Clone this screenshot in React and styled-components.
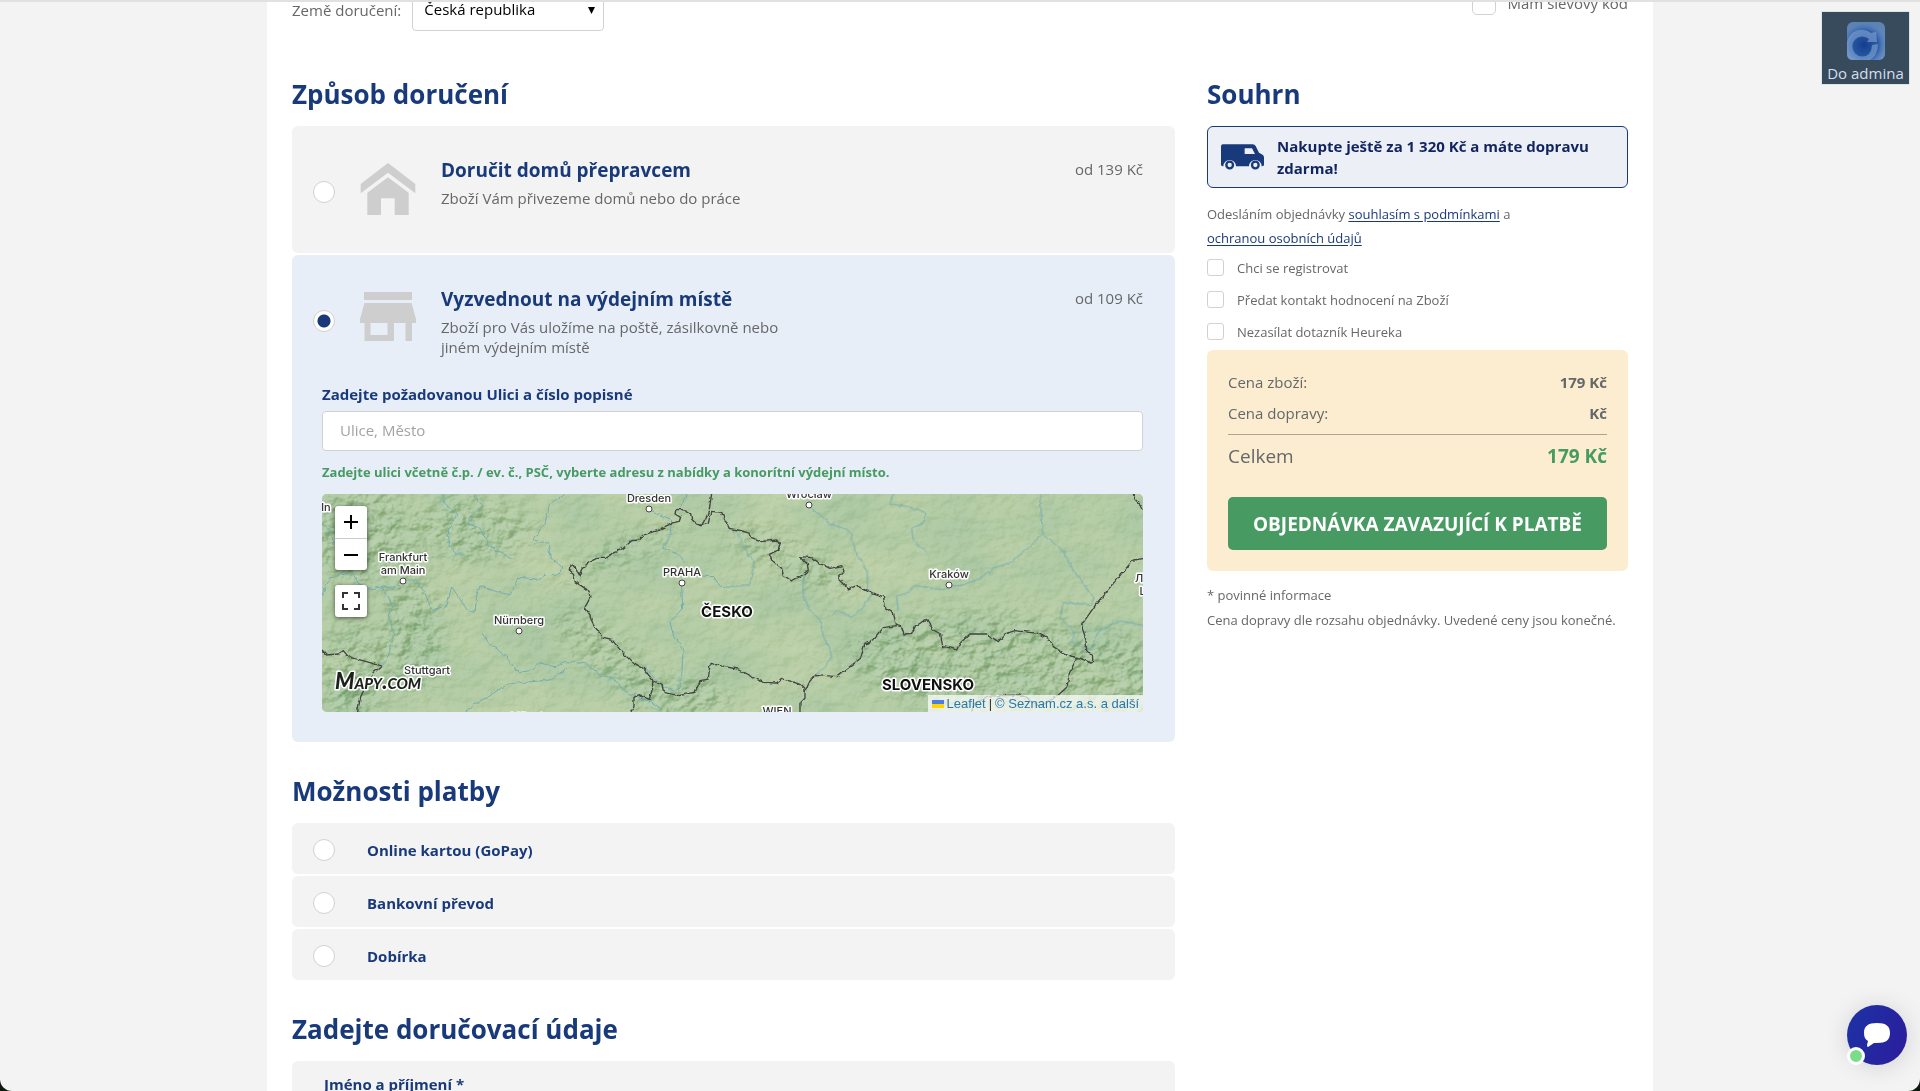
import React, { useState } from "react";
import styled, { createGlobalStyle, css } from "styled-components";

const color = {
  navy: "#193a7a",
  deepNavy: "#10245f",
  text: "#666769",
  grey: "#f3f3f3",
  blue: "#e8eef8",
  cream: "#fcedd0",
  green: "#479a61",
  line: "#d2d2d2",
};

const GlobalStyle = createGlobalStyle`
  *, *::before, *::after { box-sizing: border-box; }
  body {
    margin: 0;
    background: #0b1a0d;
    color: ${color.text};
    font: 15px/20px "Open Sans", "Noto Sans", sans-serif;
  }
  h2, h3, p { margin: 0; }
  button, input, select { font: inherit; }
`;

const Shell = styled.div`
  height: 100vh;
  overflow: hidden;
  background: ${color.grey};
  border-top: 2px solid #e1e1e1;
  border-radius: 0 0 12px 12px;
`;

const Page = styled.div`
  max-width: 1386px;
  margin: 0 auto;
  padding: 0 25px;
  background: #fff;
`;

const TopRow = styled.header`
  display: flex;
  justify-content: space-between;
  align-items: flex-end;
  height: 29px;
  overflow: hidden;
`;

const Country = styled.div`
  display: flex;
  align-items: center;
  gap: 11px;
`;

const SelectWrap = styled.div`
  position: relative;
  svg {
    position: absolute;
    right: 9px;
    top: 18px;
    pointer-events: none;
  }
`;

const Select = styled.select`
  appearance: none;
  display: block;
  width: 192px;
  height: 42px;
  padding: 0 11px 2px;
  border: 1px solid ${color.line};
  border-radius: 4px;
  background: #fff;
  color: #000;
`;

const Coupon = styled.label`
  display: flex;
  align-items: center;
  gap: 12px;
  padding-bottom: 16px;
`;

const Box = styled.input`
  appearance: none;
  flex: none;
  width: ${(p) => (p.$large ? 24 : 17)}px;
  height: ${(p) => (p.$large ? 24 : 17)}px;
  margin: 0;
  border: 1px solid ${color.line};
  border-radius: ${(p) => (p.$large ? 5 : 3)}px;
  background: #fff;
  &:checked { background: ${color.navy}; }
`;

const Radio = styled.input`
  appearance: none;
  flex: none;
  width: 22px;
  height: 22px;
  margin: 0;
  border: 1px solid ${color.line};
  border-radius: 50%;
  background: #fff;
  &:checked { background: radial-gradient(circle, ${color.navy} 6px, #fff 7px); }
`;

const Columns = styled.main`
  display: grid;
  grid-template-columns: minmax(0, 1fr) 421px;
  gap: 32px;
  padding-top: 45px;
`;

const Section = styled.section`
  margin-bottom: 31px;
`;

const Heading = styled.h2`
  padding-bottom: 14px;
  color: ${color.navy};
  font-size: 26px;
  line-height: 36px;
  font-weight: 700;
`;

const Stack = styled.div`
  display: flex;
  flex-direction: column;
  gap: 2px;
`;

const Card = styled.div`
  padding: 0 32px 30px 30px;
  border-radius: 6px;
  background: ${(p) => (p.$active ? color.blue : color.grey)};
`;

const Option = styled.label`
  display: grid;
  grid-template-columns: 22px 56px minmax(0, 350px) 1fr;
  column-gap: 25px;
  min-height: 97px;
  margin-left: -9px;
  padding-top: 30px;
`;

const OptionRadio = styled(Radio)`
  margin-top: 25px;
`;

const OptionIcon = styled.svg`
  margin-top: 7px;
  fill: #cecece;
`;

const OptionTitle = styled.h3`
  color: ${color.navy};
  font-size: 19px;
  line-height: 28px;
  font-weight: 700;
`;

const OptionText = styled.p`
  padding-top: 4px;
`;

const Price = styled.span`
  padding-top: 3px;
  text-align: right;
`;

const FieldLabel = styled.label`
  display: block;
  padding: 27px 0 7px;
  color: ${color.navy};
  font-weight: 700;
`;

const Field = styled.input`
  display: block;
  width: 100%;
  height: 40px;
  padding: 0 17px 2px;
  border: 1px solid ${color.line};
  border-radius: 4px;
  background: #fff;
  &::placeholder { color: #a3a3a3; opacity: 1; }
`;

const AddressCard = styled(Card)`
  padding: 13px 32px 30px;
  ${FieldLabel} { padding-top: 0; }
`;

const Hint = styled.p`
  padding: 11px 0 12px;
  color: ${color.green};
  font-size: 13px;
  font-weight: 700;
`;

const MapBox = styled.div`
  position: relative;
  height: 218px;
  overflow: hidden;
  border-radius: 5px;
  background: #bdd1a9;
  > svg { display: block; width: 100%; height: 100%; }
`;

const MapControls = styled.div`
  position: absolute;
  top: 12px;
  left: 13px;
  display: grid;
  gap: 15px;
`;

const ControlGroup = styled.div`
  display: grid;
  border-radius: 3px;
  background: #fff;
  box-shadow: 0 1px 4px rgba(0, 0, 0, 0.6);
`;

const MapButton = styled.button`
  display: grid;
  place-items: center;
  width: 32px;
  height: 32px;
  padding: 0;
  border: 0;
  background: none;
  & + & { border-top: 1px solid #ccc; }
`;

const Attribution = styled.div`
  position: absolute;
  right: 0;
  bottom: 0;
  display: flex;
  align-items: center;
  gap: 3px;
  padding: 0 4px;
  background: rgba(255, 255, 255, 0.7);
  color: #333;
  font: 13px/17px "Liberation Sans", Arial, sans-serif;
  a { color: #2a78ab; text-decoration: none; }
`;

const Payment = styled.label`
  display: flex;
  align-items: center;
  gap: 32px;
  height: 51px;
  padding: 3px 21px 0;
  border-radius: 6px;
  background: ${color.grey};
  color: ${color.navy};
  font-weight: 700;
`;

const Shipping = styled.div`
  display: flex;
  align-items: center;
  gap: 13px;
  min-height: 62px;
  padding: 8px 13px;
  border: 1px solid ${color.navy};
  border-radius: 6px;
  background: #eceff5;
  color: ${color.deepNavy};
  font-weight: 700;
  line-height: 22px;
  svg { flex: none; }
`;

const Terms = styled.p`
  padding: 14px 0 5px;
  font-size: 13px;
  line-height: 24px;
  a { color: ${color.navy}; text-underline-offset: 2px; }
`;

const Check = styled.label`
  display: flex;
  align-items: center;
  gap: 13px;
  height: 32px;
  padding-bottom: 7px;
  font-size: 13px;
`;

const Checks = styled.div`
  height: 95px;
`;

const Totals = styled.div`
  padding: 17px 21px 21px;
  border-radius: 6px;
  background: ${color.cream};
`;

const TotalRow = styled.div`
  display: flex;
  justify-content: space-between;
  line-height: 31px;
  ${(p) =>
    p.$sum &&
    css`
      margin-top: 5px;
      padding-top: 6px;
      border-top: 1px solid #b0a48e;
      font-size: 19px;
      strong { color: ${color.green}; }
    `}
`;

const Submit = styled.button`
  display: block;
  width: 100%;
  height: 53px;
  margin-top: 25px;
  padding: 0;
  border: 0;
  border-radius: 5px;
  background: ${color.green};
  color: #fff;
  font-size: 19px;
  font-weight: 700;
`;

const Notes = styled.div`
  padding-top: 12px;
  font-size: 13px;
  line-height: 25px;
`;

const AdminLink = styled.a`
  position: fixed;
  top: 11px;
  right: 10px;
  display: flex;
  flex-direction: column;
  align-items: center;
  gap: 3px;
  width: 89px;
  height: 74px;
  padding-top: 10px;
  border: 1px solid #dfe4e9;
  background: #374b5d;
  color: #d5dfeb;
  text-decoration: none;
`;

const ChatButton = styled.button`
  position: fixed;
  right: 13px;
  bottom: 26px;
  display: grid;
  place-items: center;
  width: 60px;
  height: 60px;
  padding: 0;
  border: 0;
  border-radius: 50%;
  background: linear-gradient(110deg, #1c33a4, #2c1c9c);
  box-shadow: 0 2px 24px rgba(0, 0, 0, 0.14);
  &::after {
    content: "";
    position: absolute;
    left: 0;
    bottom: 0;
    width: 18px;
    height: 18px;
    border: 3px solid #fff;
    border-radius: 50%;
    background: #7bdc8b;
  }
`;

const HouseIcon = () => (
  <OptionIcon width="56" height="52" viewBox="303 489 164 156">
    <path d="M385 489 467 552V580L385 518 303 580V552Z" />
    <path d="M385 532 447 578V645H405V595H364V645H323V578Z" />
  </OptionIcon>
);

const ShopIcon = () => (
  <OptionIcon width="56" height="49" viewBox="0 0 56 49">
    <path d="M4 0H52V8H4ZM4.500 11H51.500L56 27V31H0V27Z" />
    <path fillRule="evenodd" d="M4.500 31H34V49H4.500ZM10.500 31V43H27.500V31ZM45.500 31H52V49H45.500Z" />
  </OptionIcon>
);

const VanIcon = () => (
  <svg width="43" height="26" viewBox="92 252 129 76" fill={color.navy}>
    <path
      fillRule="evenodd"
      d="M98 252H187Q193 252 196 257L206 277 217 283Q221 286 221 291V313Q221 318 214 318A19 19 0 0 0 176 318H137A19 19 0 0 0 99 318Q92 318 92 313V258Q92 252 98 252ZM163 264V281H194L185 264Z"
    />
    <circle cx="118" cy="314" r="10" fill="none" stroke={color.navy} strokeWidth="7" />
    <circle cx="195" cy="314" r="10" fill="none" stroke={color.navy} strokeWidth="7" />
  </svg>
);

const borders = {
  west: [
    "M1205 42 1200 75 1192 105 1175 137 1160 132 1145 118 1142 100 1125 90 1098 88 1095 102 1112 112 1108 124 1090 128 1040 152 1000 165 985 180 965 182 940 205 915 215 885 235 860 235 835 248 815 268 808 288 795 262 780 255 778 270 790 280 795 305 830 328 843 348 825 382 840 405 850 435 880 472 905 478 935 515 965 545 1000 565 1028 600 1028 625 1018 658 985 645 972 652 972 680 962 697",
    "M36 510 50 525 85 522 100 512 115 530 150 540 215 558 190 580 175 600 160 630 150 660 142 697",
  ],
  middle: [
    "M190 588 215 600 222 622 265 632 315 622 330 590 355 585 360 535 405 545 440 552 490 578 520 592 560 594 575 580 635 600 645 610 645 640 630 655 630 685",
    "M332 122 355 115 362 82 395 85 405 105 418 130 455 138 480 145 485 158 515 170 560 165 570 180 565 195 538 208 545 225 575 250 580 270 605 288 635 272 655 255 652 238 632 215 665 218 690 235 720 250 755 242 762 258 742 280 775 312 800 302 835 320 880 335 888 370 910 385 920 422 880 428 855 460 825 478 812 520 780 545 740 575 710 572 680 568 660 588 645 620",
  ],
  east: [
    "M500 437 515 440 522 462 545 460 558 435 590 418 610 450 632 462 638 500 655 502 680 510 690 490 720 462 770 462 805 485 825 462 855 452 925 460 960 480 970 500 1010 525 1050 535 1088 550 1088 530 1070 512 1068 480 1055 435 1100 370 1150 310 1210 240 1245 235",
    "M1040 535 1018 580 1012 620 985 645 930 680 880 645 780 648 735 670 725 695",
    "M1210 42 1215 58 1232 75 1245 98",
  ],
};

const rivers = {
  west: [
    "M395 42 405 70 440 105 415 150 418 195 440 222 465 222",
    "M490 42 518 78 490 100 470 130 510 145 535 195 560 210 605 235",
    "M765 42 720 70 705 130 670 180 715 190 720 230 755 260 750 280 725 285M708 282 690 298 625 292 600 345 560 335 510 318 500 345 495 400 475 395 425 320 410 380 365 390 345 340 320 300 290 300 250 325 215 320 180 328 145 310 125 275 60 295 36 345",
    "M215 320 235 350 248 382 235 405 252 460 238 520 218 556",
    "M515 457 530 485 580 520 625 578 660 572 690 548 735 560 770 545 830 552 870 585 910 595 945 635 1020 665 1055 690",
    "M465 695 500 670 550 640 590 612 720 600 770 565",
    "M36 130 65 160 70 195",
    "M1025 92 1085 120 1080 170 1060 205 1110 225 1125 250M1130 42 1112 80",
    "M1115 318 1118 385 1080 425 1090 465 1120 505 1115 590 1105 632 1060 620 1000 560",
    "M1170 288 1210 290 1230 318 1260 322",
  ],
  east: [
    "M235 78 300 130 360 155 375 210 412 275 412 320 425 345 400 380 365 412 320 390 305 405",
    "M490 42 480 72 545 82 588 98 580 130 545 145 550 180 590 217",
    "M930 42 938 160 900 200 840 248 790 265 750 295 700 315 658 320 640 330 550 315 540 335 500 350 505 395",
    "M938 160 1000 215 1030 270 1070 325 1092 350 1085 375 1000 368 990 410 1030 450 1030 490 1090 508",
    "M1245 438 1170 422 1105 455 1090 500",
    "M25 158 45 210 72 245 60 315 0 320",
    "M222 280 218 345 240 390 270 420 280 470 305 520 295 550 262 580",
  ],
};

const origin = {
  west: "translate(-12 -14) scale(0.3333)",
  middle: "translate(268 -9) scale(0.3333)",
  east: "translate(408 -14) scale(0.3333)",
};

const cities = [
  { name: "Dresden", x: 327, y: 8, dotY: 15 },
  { name: "Wrocław", x: 487, y: 4, dotY: 11 },
  { name: "Frankfurt", x: 81, y: 67 },
  { name: "am Main", x: 81, y: 80, dotY: 87 },
  { name: "PRAHA", x: 360, y: 82, dotY: 89 },
  { name: "Nürnberg", x: 197, y: 130, dotY: 137 },
  { name: "Kraków", x: 627, y: 84, dotY: 91 },
  { name: "Stuttgart", x: 105, y: 180 },
  { name: "WIEN", x: 455, y: 221 },
  { name: "München", x: 213, y: 227 },
  { name: "ln", x: 4, y: 17 },
  { name: "Львів", x: 828, y: 88 },
  { name: "Lviv", x: 828, y: 101 },
];

const Label = styled.text`
  font: ${(p) => (p.$country ? "700 15px" : "500 11px")} Inter, sans-serif;
  fill: ${(p) => (p.$country ? "#111" : "#333")};
  stroke: #fff;
  stroke-width: 3px;
  stroke-linejoin: round;
  paint-order: stroke;
  text-anchor: middle;
`;

const Brand = styled.text`
  font: italic 900 22px Lato, sans-serif;
  font-variant: small-caps;
  fill: #1d211c;
  stroke: #fff;
  stroke-width: 3px;
  stroke-linejoin: round;
  paint-order: stroke;
`;

const MapDrawing = () => (
  <svg viewBox="0 0 821 218" preserveAspectRatio="xMidYMid slice" role="img" aria-label="Mapa výdejních míst">
    <defs>
      <filter id="relief" x="0" y="0" width="100%" height="100%" colorInterpolationFilters="sRGB">
        <feTurbulence type="fractalNoise" baseFrequency="0.07 0.09" numOctaves="4" seed="8" />
        <feDiffuseLighting surfaceScale="6" diffuseConstant="0.707" lightingColor="#fff">
          <feDistantLight azimuth="225" elevation="45" />
        </feDiffuseLighting>
      </filter>
      <filter id="tint" x="0" y="0" width="100%" height="100%" colorInterpolationFilters="sRGB">
        <feTurbulence type="fractalNoise" baseFrequency="0.012 0.02" numOctaves="4" seed="21" />
        <feColorMatrix values="0 0 0 0 0.66  0 0 0 0 0.78  0 0 0 0 0.64  2 0 0 0 -0.500" />
      </filter>
      <filter id="rough">
        <feTurbulence type="fractalNoise" baseFrequency="0.18" numOctaves="2" seed="4" result="n" />
        <feDisplacementMap in="SourceGraphic" in2="n" scale="4" xChannelSelector="R" yChannelSelector="G" />
      </filter>
      <filter id="soft" x="-30%" y="-30%" width="160%" height="160%"><feGaussianBlur stdDeviation="10" /></filter>
      <mask id="mountains">
        <g fill="#fff" filter="url(#soft)">
          <ellipse cx="660" cy="165" rx="130" ry="45" />
          <ellipse cx="785" cy="180" rx="50" ry="40" />
          <ellipse cx="290" cy="165" rx="70" ry="18" transform="rotate(40 290 165)" />
          <ellipse cx="300" cy="58" rx="70" ry="10" transform="rotate(-24 300 58)" />
          <ellipse cx="470" cy="65" rx="70" ry="16" transform="rotate(25 470 65)" />
          <ellipse cx="150" cy="35" rx="60" ry="30" />
          <ellipse cx="40" cy="40" rx="50" ry="50" />
          <ellipse cx="90" cy="140" rx="30" ry="60" />
          <ellipse cx="360" cy="205" rx="50" ry="20" />
          <ellipse cx="30" cy="180" rx="30" ry="50" />
        </g>
      </mask>
    </defs>
    <rect width="821" height="218" fill="#bdd0a8" />
    <rect width="821" height="218" filter="url(#tint)" opacity="0.8" />
    <g mask="url(#mountains)">
      <rect width="821" height="218" fill="#9fc09a" opacity="0.35" />
    </g>
    <rect width="821" height="218" filter="url(#relief)" opacity="0.2" style={{ mixBlendMode: "soft-light" }} />
    <g mask="url(#mountains)" style={{ mixBlendMode: "soft-light" }} opacity="0.6">
      <rect width="821" height="218" filter="url(#relief)" />
    </g>
    <g fill="none" stroke="#74adb3" strokeWidth="3" strokeLinejoin="round" filter="url(#rough)">
      {Object.entries(rivers).map(([part, list]) => (
        <g key={part} transform={origin[part]}>
          {list.map((d) => <path key={d} d={d} />)}
        </g>
      ))}
    </g>
    <g fill="none" stroke="#424440" strokeWidth="4" strokeLinejoin="round" filter="url(#rough)">
      {Object.entries(borders).map(([part, list]) => (
        <g key={part} transform={origin[part]}>
          {list.map((d) => <path key={d} d={d} />)}
        </g>
      ))}
    </g>
    {cities.map((c) => (
      <g key={c.name}>
        <Label x={c.x} y={c.y}>{c.name}</Label>
        {c.dotY && <circle cx={c.x} cy={c.dotY} r="3" fill="#fff" stroke="#444" />}
      </g>
    ))}
    <Label $country x="405" y="123">ČESKO</Label>
    <Label $country x="606" y="196">SLOVENSKO</Label>
    <Brand x="13" y="195">Mapy.com</Brand>
  </svg>
);

const PickupMap = () => (
  <MapBox>
    <MapDrawing />
    <MapControls>
      <ControlGroup>
        <MapButton type="button" aria-label="Přiblížit">
          <svg width="14" height="14" viewBox="0 0 14 14" stroke="#000" strokeWidth="2"><path d="M0 7H14M7 0V14" /></svg>
        </MapButton>
        <MapButton type="button" aria-label="Oddálit">
          <svg width="14" height="14" viewBox="0 0 14 14" stroke="#000" strokeWidth="2"><path d="M0 7H14" /></svg>
        </MapButton>
      </ControlGroup>
      <ControlGroup>
        <MapButton type="button" aria-label="Celá obrazovka">
          <svg width="18" height="18" viewBox="0 0 18 18" fill="none" stroke="#333" strokeWidth="2">
            <path d="M1 6V1H6M12 1H17V6M17 12V17H12M6 17H1V12" />
          </svg>
        </MapButton>
      </ControlGroup>
    </MapControls>
    <Attribution>
      <svg width="12" height="8" viewBox="0 0 12 8"><path fill="#4C7BE1" d="M0 0h12v4H0z" /><path fill="#FFD500" d="M0 4h12v4H0z" /></svg>
      <a href="#leaflet">Leaflet</a>
      <span>|</span>
      <a href="#seznam">© Seznam.cz a.s. a další</a>
    </Attribution>
  </MapBox>
);

const AdminIcon = () => (
  <svg width="38" height="38" viewBox="0 0 38 38">
    <defs>
      <linearGradient id="tile" x1="0" y1="0" x2="0" y2="1">
        <stop offset="0" stopColor="#5c82b4" /><stop offset="1" stopColor="#6b91c6" />
      </linearGradient>
      <radialGradient id="core" cx="0.450" cy="0.600" r="0.620">
        <stop offset="0" stopColor="#153f8d" /><stop offset="0.600" stopColor="#2b5ba6" /><stop offset="1" stopColor="#5f88bd" stopOpacity="0" />
      </radialGradient>
    </defs>
    <rect width="38" height="38" rx="6" fill="url(#tile)" />
    <rect width="38" height="38" rx="6" fill="url(#core)" />
    <path d="M0 20A15 15 0 0 1 24 11L29 10 30 20 20 20 22 17A10 10 0 1 0 22 32Q25 28 25 23L31 22Q31 33 23 38H6Q0 38 0 32Z" fill="#86a6d3" opacity="0.6" />
  </svg>
);

const deliveries = [
  { id: "home", title: "Doručit domů přepravcem", text: "Zboží Vám přivezeme domů nebo do práce", price: "od 139 Kč", icon: <HouseIcon /> },
  { id: "pickup", title: "Vyzvednout na výdejním místě", text: "Zboží pro Vás uložíme na poště, zásilkovně nebo jiném výdejním místě", price: "od 109 Kč", icon: <ShopIcon /> },
];

export default function App() {
  const [delivery, setDelivery] = useState("pickup");
  return (
    <>
      <GlobalStyle />
      <Shell>
        <Page>
          <TopRow>
            <Country>
              <label htmlFor="country">Země doručení:</label>
              <SelectWrap>
                <Select id="country"><option>Česká republika</option></Select>
                <svg width="7" height="7" viewBox="0 0 7 7"><path d="M0 0H7L3.500 7Z" /></svg>
              </SelectWrap>
            </Country>
            <Coupon><Box $large type="checkbox" />Mám slevový kód</Coupon>
          </TopRow>
          <Columns>
            <div>
              <Section>
                <Heading>Způsob doručení</Heading>
                <Stack>
                  {deliveries.map((d) => (
                    <Card key={d.id} $active={delivery === d.id}>
                      <Option>
                        <OptionRadio type="radio" name="delivery" checked={delivery === d.id} onChange={() => setDelivery(d.id)} />
                        {d.icon}
                        <div>
                          <OptionTitle>{d.title}</OptionTitle>
                          <OptionText>{d.text}</OptionText>
                        </div>
                        <Price>{d.price}</Price>
                      </Option>
                      {delivery === d.id && (
                        <>
                          <FieldLabel htmlFor="street">Zadejte požadovanou Ulici a číslo popisné</FieldLabel>
                          <Field id="street" type="text" placeholder="Ulice, Město" />
                          <Hint>Zadejte ulici včetně č.p. / ev. č., PSČ, vyberte adresu z nabídky a konorítní výdejní místo.</Hint>
                          <PickupMap />
                        </>
                      )}
                    </Card>
                  ))}
                </Stack>
              </Section>
              <Section>
                <Heading>Možnosti platby</Heading>
                <Stack>
                  {["Online kartou (GoPay)", "Bankovní převod", "Dobírka"].map((name) => (
                    <Payment key={name}><Radio type="radio" name="payment" />{name}</Payment>
                  ))}
                </Stack>
              </Section>
              <Section>
                <Heading>Zadejte doručovací údaje</Heading>
                <AddressCard>
                  <FieldLabel htmlFor="name">Jméno a příjmení *</FieldLabel>
                  <Field id="name" type="text" />
                </AddressCard>
              </Section>
            </div>
            <aside>
              <Heading>Souhrn</Heading>
              <Shipping><VanIcon /><span>Nakupte ještě za 1 320 Kč a máte dopravu zdarma!</span></Shipping>
              <Terms>
                Odesláním objednávky <a href="#podminky">souhlasím s podmínkami</a> a<br />
                <a href="#udaje">ochranou osobních údajů</a>
              </Terms>
              <Checks>
                {["Chci se registrovat", "Předat kontakt hodnocení na Zboží", "Nezasílat dotazník Heureka"].map((name) => (
                  <Check key={name}><Box type="checkbox" />{name}</Check>
                ))}
              </Checks>
              <Totals>
                <TotalRow><span>Cena zboží:</span><strong>179 Kč</strong></TotalRow>
                <TotalRow><span>Cena dopravy:</span><strong>Kč</strong></TotalRow>
                <TotalRow $sum><span>Celkem</span><strong>179 Kč</strong></TotalRow>
                <Submit type="submit">OBJEDNÁVKA ZAVAZUJÍCÍ K PLATBĚ</Submit>
              </Totals>
              <Notes>
                <p>* povinné informace</p>
                <p>Cena dopravy dle rozsahu objednávky. Uvedené ceny jsou konečné.</p>
              </Notes>
            </aside>
          </Columns>
        </Page>
        <AdminLink href="#admin"><AdminIcon />Do admina</AdminLink>
        <ChatButton type="button" aria-label="Chat">
          <svg width="26" height="24" viewBox="0 0 26 24" fill="#fff">
            <path d="M13 0C22 0 26 3 26 10C26 17 22 20 13 20H10Q7 22 4 24Q3 24 3 22L4 18Q0 16 0 10C0 3 4 0 13 0Z" />
          </svg>
        </ChatButton>
      </Shell>
    </>
  );
}
